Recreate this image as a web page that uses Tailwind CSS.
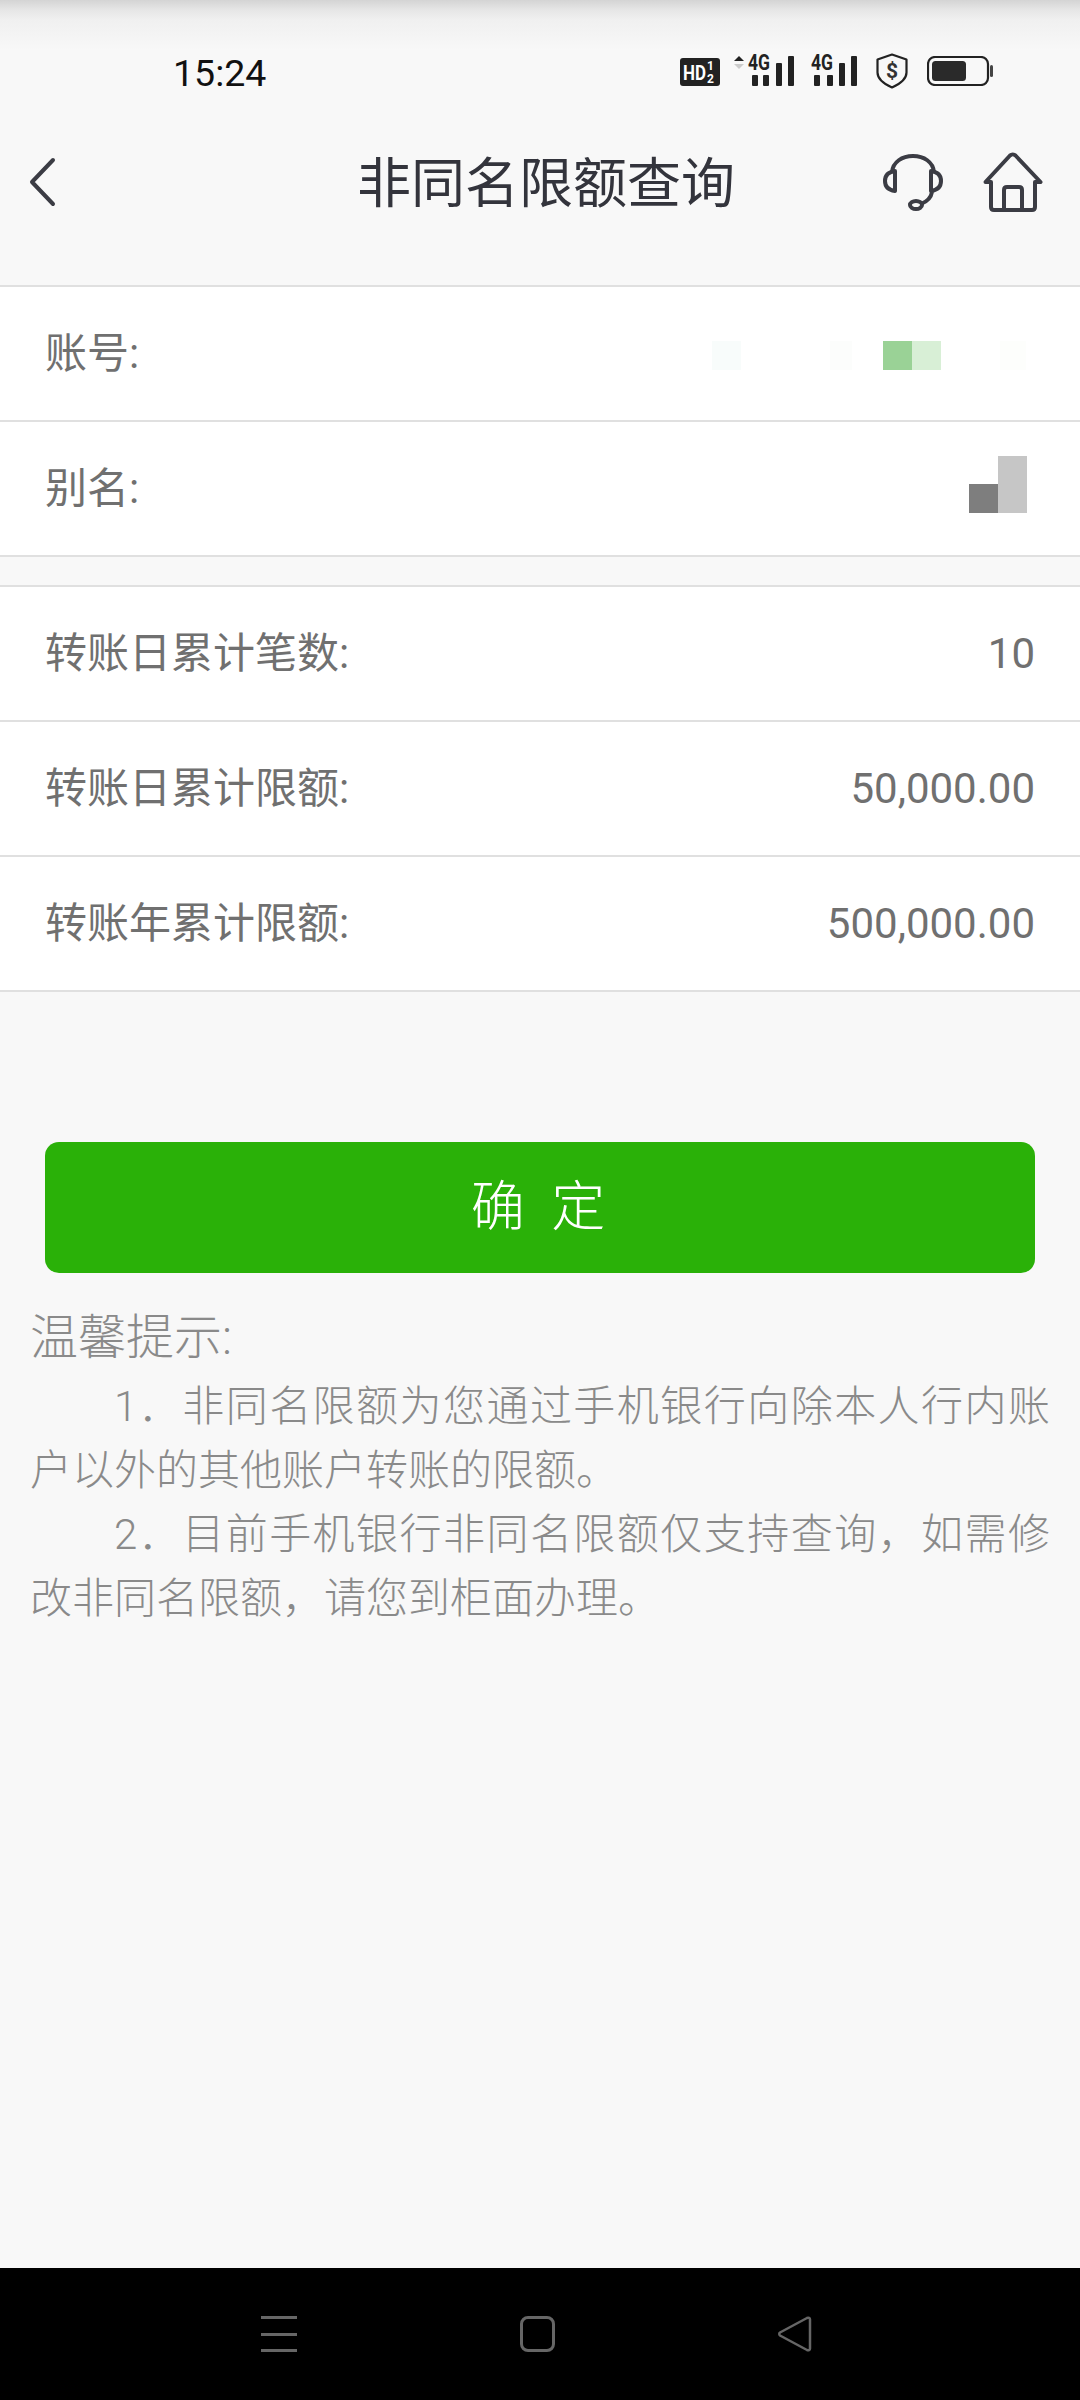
<!DOCTYPE html>
<html lang="zh-CN">
<head>
    <meta charset="UTF-8">
    <meta name="viewport" content="width=device-width, initial-scale=1.0">
    <title>非同名限额查询</title>
    <script src="https://cdn.jsdelivr.net/npm/@tailwindcss/browser@4"></script>
</head>
<body class="bg-[#f8f8f8] font-[Roboto,'Noto_Sans_CJK_SC',sans-serif]">
    <div class="w-[1080px] h-[2400px] flex flex-col overflow-hidden">
        <!-- Status bar -->
        <div class="h-[120px] shrink-0 flex bg-[linear-gradient(to_bottom,#d4d4d4_0px,#e6e6e6_10px,#f0f0f0_20px,#f8f8f8_50px)]">
            <div class="pl-[173px] pt-[51px] text-[37.500px] leading-[44px] text-[#111]">15:24</div>
            <div class="ml-auto mr-[87px] pt-[53px] flex items-start">
                <svg class="w-[40px] h-[28px] mt-[5px]" viewBox="0 0 40 28">
                    <rect x="0" y="0" width="40" height="28" rx="3" fill="#222"/>
                    <text x="3" y="22" font-family="Roboto" font-weight="700" font-size="21" fill="#fff" textLength="23" lengthAdjust="spacingAndGlyphs">HD</text>
                    <text x="27" y="12" font-family="Roboto" font-weight="700" font-size="12" fill="#fff">1</text>
                    <text x="27" y="25" font-family="Roboto" font-weight="700" font-size="12" fill="#fff">2</text>
                </svg>
                <svg class="w-[62px] h-[41px] ml-[13px] -mt-[6px]" viewBox="0 -6 62 41">
                    <path d="M1 8l5-5 5 5z" fill="#222"/><path d="M1 11l5 5 5-5z" fill="#ccc"/>
                    <text x="15" y="17" font-family="Roboto" font-weight="700" font-size="22" fill="#222" textLength="22" lengthAdjust="spacingAndGlyphs">4G</text>
                    <rect x="19" y="22" width="6" height="11" rx="1" fill="#222"/>
                    <rect x="30" y="22" width="6" height="11" rx="1" fill="#222"/>
                    <rect x="43" y="10" width="6" height="23" rx="1" fill="#222"/>
                    <rect x="55" y="3" width="6" height="30" rx="1" fill="#222"/>
                </svg>
                <svg class="w-[46px] h-[41px] ml-[16px] -mt-[6px]" viewBox="0 -6 46 41">
                    <text x="0" y="17" font-family="Roboto" font-weight="700" font-size="22" fill="#222" textLength="22" lengthAdjust="spacingAndGlyphs">4G</text>
                    <rect x="3" y="22" width="6" height="11" rx="1" fill="#222"/>
                    <rect x="16" y="22" width="6" height="11" rx="1" fill="#222"/>
                    <rect x="28" y="10" width="6" height="23" rx="1" fill="#222"/>
                    <rect x="40" y="3" width="6" height="30" rx="1" fill="#222"/>
                </svg>
                <svg class="w-[32px] h-[36px] ml-[19px]" viewBox="0 0 32 36">
                    <path d="M16 1.500l14.500 5v13c0 6.500-5.500 11-14.500 15C7 30.500 1.500 26 1.500 19.500v-13z" fill="none" stroke="#222" stroke-width="2.200" stroke-linejoin="round"/>
                    <text x="16" y="25" text-anchor="middle" font-family="Roboto" font-weight="700" font-size="21" fill="#333">$</text>
                </svg>
                <svg class="w-[66px] h-[30px] ml-[19px] mt-[3px]" viewBox="0 0 66 30">
                    <rect x="1" y="1" width="60" height="28" rx="7" fill="none" stroke="#222" stroke-width="2.200"/>
                    <rect x="5" y="5" width="34" height="20" rx="3.500" fill="#2a2a2a"/>
                    <rect x="63" y="9" width="3" height="12" rx="1.500" fill="#444"/>
                </svg>
            </div>
        </div>

        <!-- Header -->
        <div class="h-[165px] shrink-0 flex items-center pb-[41px]">
            <svg class="w-[28px] h-[50px] ml-[28px]" viewBox="0 0 28 50">
                <path d="M25 3L4 25l21 22" fill="none" stroke="#3b3c44" stroke-width="4" stroke-linecap="round" stroke-linejoin="round"/>
            </svg>
            <h1 class="ml-[301px] mt-[6px] text-[54px] leading-[78px] text-[#33343c] font-normal whitespace-nowrap">非同名限额查询</h1>
            <svg class="w-[60px] h-[57px] ml-auto" viewBox="0 0 60 57">
                <path d="M9 18C10 8 19 2 30 2s20 6 21 16" fill="none" stroke="#3b3c44" stroke-width="4"/>
                <path d="M12 17C5 18 2 22 2 27s3 9 10 10z" fill="none" stroke="#3b3c44" stroke-width="4" stroke-linejoin="round"/>
                <path d="M48 17c7 1 10 5 10 10s-3 9-10 10z" fill="none" stroke="#3b3c44" stroke-width="4" stroke-linejoin="round"/>
                <path d="M49 38c-1 6-6 10-11 12" fill="none" stroke="#3b3c44" stroke-width="4"/>
                <ellipse cx="33" cy="51" rx="6" ry="4" fill="none" stroke="#3b3c44" stroke-width="4"/>
            </svg>
            <svg class="w-[60px] h-[60px] ml-[40px] mr-[37px]" viewBox="0 0 60 60">
                <path d="M2.500 30L27 3.500c1.500-1.500 4-1.500 5.500 0L57.500 30H52v25c0 2-1 3-3 3H11c-2 0-3-1-3-3V30z" fill="none" stroke="#3b3c44" stroke-width="4" stroke-linejoin="round"/>
                <path d="M21 58V38c0-2 1-3 3-3h12c2 0 3 1 3 3v20" fill="none" stroke="#3b3c44" stroke-width="4"/>
            </svg>
        </div>

        <!-- Account -->
        <div class="bg-white border-y-2 border-[#e0e0e0] text-[42px] text-[#707070] shrink-0">
            <div class="h-[135px] flex items-center px-[45px] border-b-2 border-[#e0e0e0]">
                <span>账号:</span>
                <div class="ml-auto flex items-center mt-[4px] mr-[9px]">
                    <div class="w-[29px] h-[29px] bg-[#f8fcfb]"></div>
                    <div class="w-[22px] h-[29px] bg-[#fcfdfc] ml-[89px]"></div>
                    <div class="w-[29px] h-[29px] bg-[#9ad296] ml-[31px]"></div>
                    <div class="w-[29px] h-[29px] bg-[#d8efd6]"></div>
                    <div class="w-[26px] h-[29px] bg-[#fdfefc] ml-[59px]"></div>
                </div>
            </div>
            <div class="h-[133px] flex items-center px-[45px]">
                <span>别名:</span>
                <div class="ml-auto flex items-end mr-[8px] mb-[8px]">
                    <div class="w-[29px] h-[29px] bg-[#7e7e7e]"></div>
                    <div class="w-[29px] h-[57px] bg-[#c6c6c6]"></div>
                </div>
            </div>
        </div>

        <!-- Limits -->
        <div class="mt-[28px] bg-white border-y-2 border-[#e0e0e0] text-[42px] text-[#707070] shrink-0">
            <div class="h-[135px] flex items-center justify-between px-[45px] border-b-2 border-[#e0e0e0]">
                <span>转账日累计笔数:</span><span>10</span>
            </div>
            <div class="h-[135px] flex items-center justify-between px-[45px] border-b-2 border-[#e0e0e0]">
                <span>转账日累计限额:</span><span>50,000.00</span>
            </div>
            <div class="h-[133px] flex items-center justify-between px-[45px]">
                <span>转账年累计限额:</span><span>500,000.00</span>
            </div>
        </div>

        <!-- Confirm -->
        <div class="mt-[150px] mx-[45px] h-[131px] shrink-0 rounded-[14px] bg-[#2ab108] flex items-center justify-center text-white text-[54px] font-light pr-[4px]">
            确&nbsp;&nbsp;定
        </div>

        <!-- Tips -->
        <div class="mt-[33px] px-[30px] text-[#8a8a8a] font-light flex-1">
            <div class="text-[48px] leading-[64px]">温馨提示:</div>
            <p class="text-[42px] leading-[64px] indent-[84px] text-justify mt-[5px]">1．非同名限额为您通过手机银行向除本人行内账户以外的其他账户转账的限额。</p>
            <p class="text-[42px] leading-[64px] indent-[84px] text-justify">2．目前手机银行非同名限额仅支持查询，如需修改非同名限额，请您到柜面办理。</p>
        </div>

        <!-- Nav bar -->
        <div class="h-[132px] shrink-0 bg-black flex items-start pt-[48px] pl-[261px]">
            <div class="w-[36px] h-[36px] flex flex-col justify-between">
                <div class="h-[3px] bg-[#666]"></div>
                <div class="h-[3px] bg-[#666]"></div>
                <div class="h-[3px] bg-[#666]"></div>
            </div>
            <div class="w-[35px] h-[36px] ml-[223px] rounded-[8px] border-[3px] border-[#666]"></div>
            <svg class="w-[35px] h-[36px] ml-[222px]" viewBox="0 0 35 36">
                <path d="M30 2L3 16.500c-1 .8-1 2.200 0 3L30 34c1.500 .7 3 .2 3-1.500V3.500C33 2 31.500 1.300 30 2z" fill="none" stroke="#666" stroke-width="2.500" stroke-linejoin="round"/>
            </svg>
        </div>
    </div>
</body>
</html>
